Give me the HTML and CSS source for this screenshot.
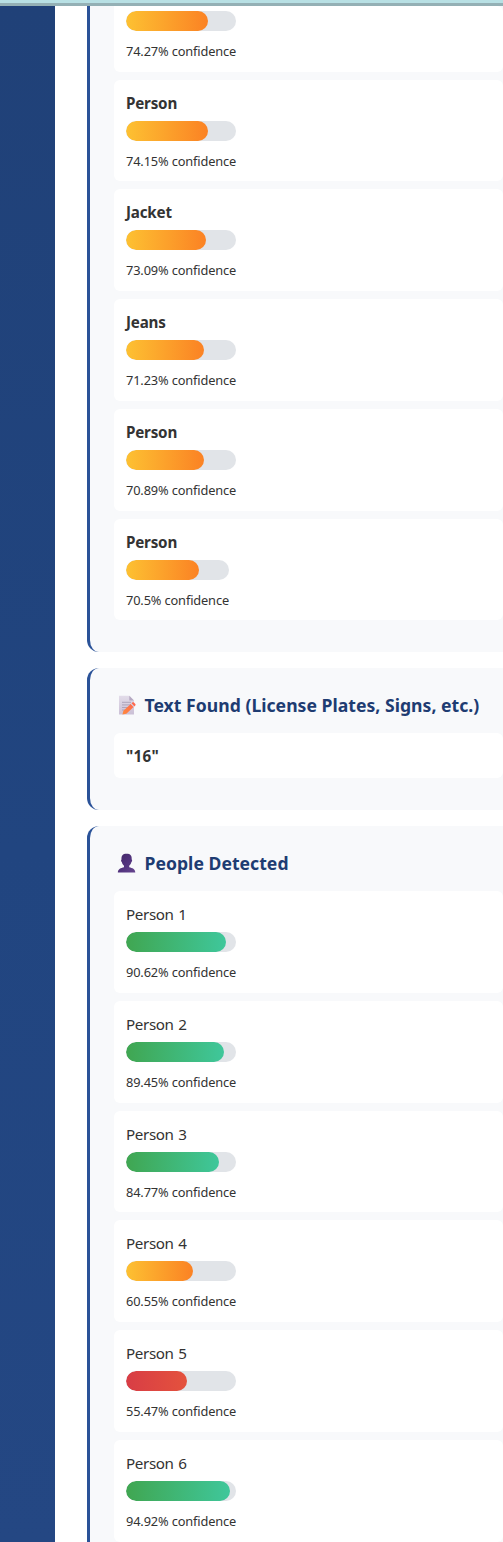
FILE: index.html
```
<!DOCTYPE html>
<html lang="en">
<head>
<meta charset="utf-8">
<title>Detection results</title>
<link rel="stylesheet" href="styles.css">
</head>
<body>
<div class="topbar"></div>
<main class="page">
<div class="content">
<section class="panel panel-continued">
<div class="item item-continued"><div class="confidence"><div class="track"><div class="fill medium" style="width:74.27%"></div></div><small>74.27% confidence</small></div></div>
<div class="item"><strong class="name">Person</strong><div class="confidence"><div class="track"><div class="fill medium" style="width:74.15%"></div></div><small>74.15% confidence</small></div></div>
<div class="item"><strong class="name">Jacket</strong><div class="confidence"><div class="track"><div class="fill medium" style="width:73.09%"></div></div><small>73.09% confidence</small></div></div>
<div class="item"><strong class="name">Jeans</strong><div class="confidence"><div class="track"><div class="fill medium" style="width:71.23%"></div></div><small>71.23% confidence</small></div></div>
<div class="item"><strong class="name">Person</strong><div class="confidence"><div class="track"><div class="fill medium" style="width:70.89%"></div></div><small>70.89% confidence</small></div></div>
<div class="item"><strong class="name">Person</strong><div class="confidence short"><div class="track"><div class="fill medium" style="width:70.5%"></div></div><small>70.5% confidence</small></div></div>
</section>
<section class="panel">
<h3><svg class="icon" viewBox="0 0 24 20"><defs><linearGradient id="paper" x1="0" y1="0" x2="0" y2="1"><stop offset="0" stop-color="#e2dce9"/><stop offset="1" stop-color="#cbc0d6"/></linearGradient><linearGradient id="pencil" x1="1" y1="0" x2="0" y2="1"><stop offset="0" stop-color="#ff6a50"/><stop offset="1" stop-color="#ff8a3c"/></linearGradient></defs><path fill="url(#paper)" d="M5 .8h10.3L20 5.4v14H5z"/><path fill="#b5a9c2" d="M15.3.8 20 5.4h-4.7z"/><path stroke="#a99fb5" stroke-width=".9" d="M8 7.3h9M8 9.9h9M8 12.5h7M8 15h3"/><path fill="url(#pencil)" d="m9.4 15.8 7.3-6.9 2.9 3.2-7.3 6.6-3.9.7z"/><path fill="#ff694d" d="m17.4 8.3 1.4-1.1c.8-.5 3.3 2 2.8 2.9l-1.3 1.4z"/><path fill="#d7c9d6" d="m16.7 8.9.7-.6 2.9 3.2-.7.6z"/></svg><span class="title">Text Found (License Plates, Signs, etc.)</span></h3>
<div class="item text-item"><strong class="name">"16"</strong></div>
</section>
<section class="panel">
<h3><svg class="icon" viewBox="0 0 24 20"><defs><linearGradient id="person" x1="0" y1="0" x2="1" y2="1"><stop offset="0" stop-color="#432866"/><stop offset=".55" stop-color="#53347f"/><stop offset="1" stop-color="#67468f"/></linearGradient></defs><path fill="url(#person)" d="M12.5.8c4 0 5.5 2 5.2 5.7.7.4.5 2.2-.3 2.6-.4 1.7-1.3 2.9-2.2 3.6v1.6c3.2 1 5.9 1.5 6.1 5.2H3.8c.2-3.7 3.1-4.2 6.2-5.2v-1.6c-.9-.7-1.8-1.9-2.2-3.6-.8-.4-1-2.2-.3-2.6C7.2 2.8 8.7.8 12.5.8z"/></svg><span class="title">People Detected</span></h3>
<div class="item"><span class="name">Person 1</span><div class="confidence"><div class="track"><div class="fill high" style="width:90.62%"></div></div><small>90.62% confidence</small></div></div>
<div class="item"><span class="name">Person 2</span><div class="confidence"><div class="track"><div class="fill high" style="width:89.45%"></div></div><small>89.45% confidence</small></div></div>
<div class="item"><span class="name">Person 3</span><div class="confidence"><div class="track"><div class="fill high" style="width:84.77%"></div></div><small>84.77% confidence</small></div></div>
<div class="item"><span class="name">Person 4</span><div class="confidence"><div class="track"><div class="fill medium" style="width:60.55%"></div></div><small>60.55% confidence</small></div></div>
<div class="item"><span class="name">Person 5</span><div class="confidence"><div class="track"><div class="fill low" style="width:55.47%"></div></div><small>55.47% confidence</small></div></div>
<div class="item"><span class="name">Person 6</span><div class="confidence"><div class="track"><div class="fill high" style="width:94.92%"></div></div><small>94.92% confidence</small></div></div>
</section>
</div>
</main>
</body>
</html>
```
FILE: styles.css
```
* { box-sizing: border-box; }
body {
  margin: 0;
  height: 1542px;
  overflow: hidden;
  display: flex;
  flex-direction: column;
  font-family: "Noto Sans", sans-serif;
  color: #333;
}
.topbar { flex: none; height: 6px; background: #b8e0e4; border-bottom: 3px solid #94b0b5; }
.page {
  flex: 1;
  min-height: 0;
  overflow: hidden;
  padding-left: 55px;
  background: linear-gradient(180deg, #204178 0%, #214580 55%, #244783 100%);
}
.content { background: #fff; padding-left: 32px; min-height: 100%; }
.panel {
  margin-bottom: 16px;
  padding: 24px 0 24px 24px;
  border-left: 3px solid #2a5298;
  border-radius: 12px 0 0 12px;
  background: #f8f9fb;
}
.panel-continued { padding-top: 0; border-top-left-radius: 0; }
h3 {
  display: flex;
  align-items: center;
  height: 25px;
  margin: 0 0 16px;
  color: #1e3c72;
  font-size: 17.6px;
  font-weight: 700;
  line-height: 25px;
  white-space: nowrap;
}
.title { padding-top: 2px; letter-spacing: .02px; }
.icon { flex: none; width: 24px; height: 20px; margin-right: 6.5px; }
.item {
  height: 101.75px;
  margin-bottom: 8px;
  padding: 11px 12px 12px;
  border-radius: 6px;
  background: #fff;
}
.item-continued { height: 65.6px; padding-top: 0; border-top-left-radius: 0; }
.text-item { height: 44.8px; }
.name { display: block; height: 24px; font-size: 15.2px; line-height: 24px; letter-spacing: -.38px; word-spacing: 1px; }
strong.name { font-weight: 700; letter-spacing: -.2px; }
.text-item strong.name { letter-spacing: .3px; }
.confidence { width: 110px; padding-top: 6px; }
.item-continued .confidence { padding-top: 5px; }
.confidence.short { width: 103px; }
.track { height: 20px; overflow: hidden; border-radius: 10px; background: #e1e4e8; }
.fill { height: 100%; border-radius: 10px; }
.high { background: linear-gradient(90deg, #40a651, #3fc79b); }
.medium { background: linear-gradient(90deg, #fdc132, #fb8224); }
.low { background: linear-gradient(90deg, #d83d45, #e4523d); }
small { display: block; margin-top: 9px; font-size: 12.8px; line-height: 22px; letter-spacing: -.14px; white-space: nowrap; }
```
